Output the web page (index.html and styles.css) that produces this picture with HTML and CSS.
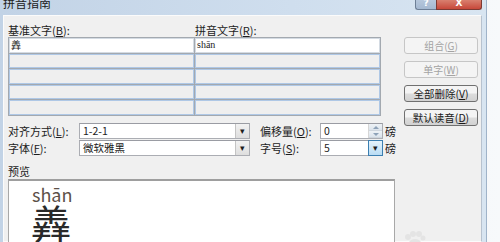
FILE: index.html
```html
<!DOCTYPE html>
<html lang="zh-CN">
<head>
  <meta charset="UTF-8" />
  <title>拼音指南</title>
  <link rel="stylesheet" href="styles.css">
</head>
<body>
  <div class="window">
    <div class="titlebar">
      <div class="title">拼音指南</div>
      <div class="caption">
        <div class="cap-btn help">?</div>
        <div class="cap-btn close">X</div>
      </div>
    </div>

    <div class="client">
      <div class="top">
        <div class="left">
          <div class="labels">
            <span>基准文字(<u>B</u>):</span>
            <span>拼音文字(<u>R</u>):</span>
          </div>
          <div class="table">
            <div class="cell active">羴</div>
            <div class="cell active pinyin">shān</div>
            <div class="cell"></div>
            <div class="cell"></div>
            <div class="cell"></div>
            <div class="cell"></div>
            <div class="cell"></div>
            <div class="cell"></div>
            <div class="cell"></div>
            <div class="cell"></div>
          </div>
        </div>
        <div class="side">
          <div class="button disabled">组合(<u>G</u>)</div>
          <div class="button disabled">单字(<u>W</u>)</div>
          <div class="button">全部删除(<u>V</u>)</div>
          <div class="button">默认读音(<u>D</u>)</div>
        </div>
      </div>

      <div class="form">
        <div class="form-row">
          <span class="label">对齐方式(<u>L</u>):</span>
          <div class="combo wide">
            <span class="value">1-2-1</span>
            <span class="arrow">&#9662;</span>
          </div>
          <span class="label second">偏移量(<u>O</u>):</span>
          <div class="combo small">
            <span class="value">0</span>
            <span class="spin">
              <span class="spin-part up"></span>
              <span class="spin-part down"></span>
            </span>
          </div>
          <span class="unit">磅</span>
        </div>
        <div class="form-row">
          <span class="label">字体(<u>F</u>):</span>
          <div class="combo wide">
            <span class="value">微软雅黑</span>
            <span class="arrow">&#9662;</span>
          </div>
          <span class="label second">字号(<u>S</u>):</span>
          <div class="combo small">
            <span class="value">5</span>
            <span class="arrow hot">&#9662;</span>
          </div>
          <span class="unit">磅</span>
        </div>
      </div>

      <div class="preview-label">预览</div>
      <div class="preview">
        <div class="ruby">shān</div>
        <div class="base">羴</div>
      </div>
    </div>
  </div>

  <svg class="paw" width="24" height="14" viewBox="0 0 24 14">
    <circle cx="6" cy="7" r="3" fill="#e4e4e4" />
    <circle cx="11" cy="4" r="3" fill="#e4e4e4" />
    <circle cx="17" cy="4" r="3" fill="#e4e4e4" />
    <circle cx="21" cy="8" r="2.5" fill="#e4e4e4" />
    <ellipse cx="13" cy="13" rx="6" ry="4" fill="#e4e4e4" />
  </svg>
</body>
</html>
```

FILE: styles.css
```css
* {
  box-sizing: border-box;
}

body {
  margin: 0;
  width: 500px;
  height: 242px;
  overflow: hidden;
  background: linear-gradient(90deg, #dfe8f2, #f7f9fb);
  font-family: "Noto Sans CJK SC", "Noto Sans", sans-serif;
  font-size: 11px;
  color: #1c1c1c;
  position: relative;
}

u {
  text-decoration: underline;
  text-underline-offset: 1px;
}

.window {
  width: 487px;
  height: 242px;
  padding: 0 4px 0 3px;
  background: linear-gradient(90deg, #c2d3e6, #cfdeee 60%, #d8e5f1);
  border-right: 1px solid #9fb3c9;
  overflow: hidden;
}

/* title bar */
.titlebar {
  height: 15px;
  display: flex;
  justify-content: space-between;
}

.title {
  font-size: 12px;
  line-height: 12px;
  margin-top: -3px;
  color: #202020;
}

.caption {
  display: flex;
  align-items: flex-start;
}

.cap-btn {
  height: 10px;
  color: #fff;
  font-family: "DejaVu Sans", sans-serif;
  font-weight: bold;
  font-size: 9px;
  line-height: 7px;
  text-align: center;
  border: 1px solid #6d7f96;
  border-top: none;
}

.cap-btn.help {
  width: 21px;
  background: linear-gradient(#b6c7dc, #a5b9d1);
  border-radius: 0 0 0 3px;
  border-right: none;
}

.cap-btn.close {
  width: 46px;
  background: linear-gradient(#d9806f, #c7483a);
  border-color: #7d3a33;
  border-radius: 0 0 3px 0;
}

/* client area */
.client {
  height: 227px;
  background: #f0f0f0;
  border: 1px solid #fbfbfb;
  border-right-color: #b7c2cf;
  padding: 8px 0 0 4px;
}

.top {
  display: flex;
  align-items: flex-start;
  height: 91px;
}

.left {
  width: 373px;
}

.labels {
  display: grid;
  grid-template-columns: 187px 1fr;
  height: 13px;
  line-height: 13px;
}

.table {
  display: grid;
  grid-template-columns: 185px 185px;
  grid-auto-rows: 14.6px;
  gap: 1px;
  padding: 1px;
  background: #a3a9b0;
  width: 373px;
}

.cell {
  background: #efefef;
  border: 1px solid #afc8e6;
  font-size: 10px;
  line-height: 12px;
  padding-left: 1px;
}

.cell.active {
  background: #fff;
  border-color: #d4dbe3;
}

.cell.pinyin {
  font-family: "Liberation Serif", serif;
}

.side {
  margin-left: 23px;
  padding-top: 13px;
  display: flex;
  flex-direction: column;
  gap: 7px;
}

.button {
  width: 74px;
  height: 17px;
  border: 1px solid #707070;
  border-radius: 3px;
  background: linear-gradient(#f4f4f4 45%, #dcdcdc 55%, #d2d2d2);
  text-align: center;
  line-height: 15px;
  font-size: 10.5px;
  color: #1a1a1a;
}

.button.disabled {
  border-color: #c6c6c6;
  background: #f4f4f4;
  color: #a3a3a3;
  font-size: 10px;
}

/* alignment / font rows */
.form {
  margin-top: 8px;
  display: flex;
  flex-direction: column;
  gap: 1px;
}

.form-row {
  display: flex;
  align-items: center;
  height: 16px;
}

.label {
  width: 71px;
}

.label.second {
  width: 60px;
  margin-left: 10px;
}

.combo {
  height: 16px;
  display: flex;
  background: #fff;
  border: 1px solid #abadb3;
  border-top-color: #9a9ca3;
}

.combo.wide {
  width: 171px;
}

.combo.small {
  width: 63px;
}

.value {
  flex: 1;
  padding-left: 3px;
  line-height: 14px;
  font-size: 10.5px;
}

.arrow {
  width: 14px;
  background: linear-gradient(#f2f2f2, #dedede);
  border-left: 1px solid #c4c4c4;
  text-align: center;
  line-height: 14px;
  font-size: 9px;
  color: #1e1e1e;
}

.arrow.hot {
  background: linear-gradient(#e5f3fc, #b9dcf4);
  border: 1px solid #3c7fb1;
  margin: -1px -1px -1px 0;
  width: 15px;
}

.spin {
  width: 14px;
  display: flex;
  flex-direction: column;
  border-left: 1px solid #d6d6d6;
}

.spin-part {
  flex: 1;
  display: flex;
  align-items: center;
  justify-content: center;
  background: linear-gradient(#eef2f6, #dce4ec);
  border-bottom: 1px solid #cfd6de;
}

.spin-part::after {
  content: "";
  border-left: 3px solid transparent;
  border-right: 3px solid transparent;
}

.spin-part.up::after {
  border-bottom: 3px solid #8ea2b8;
}

.spin-part.down::after {
  border-top: 3px solid #8ea2b8;
}

.unit {
  margin-left: 2px;
}

/* preview */
.preview-label {
  margin-top: 9px;
  height: 13px;
  line-height: 13px;
}

.preview {
  margin-top: 1px;
  width: 387px;
  height: 70px;
  background: #fff;
  border: 1px solid #a8a8a8;
  border-top: 2px solid #9e9e9e;
  padding: 5px 0 0 23px;
}

.ruby {
  font-size: 18px;
  line-height: 16px;
  color: #5c5048;
}

.base {
  font-size: 40px;
  line-height: 40px;
  color: #2a2a2a;
  margin-left: -1px;
}

.paw {
  position: absolute;
  left: 402px;
  top: 230px;
}
```
